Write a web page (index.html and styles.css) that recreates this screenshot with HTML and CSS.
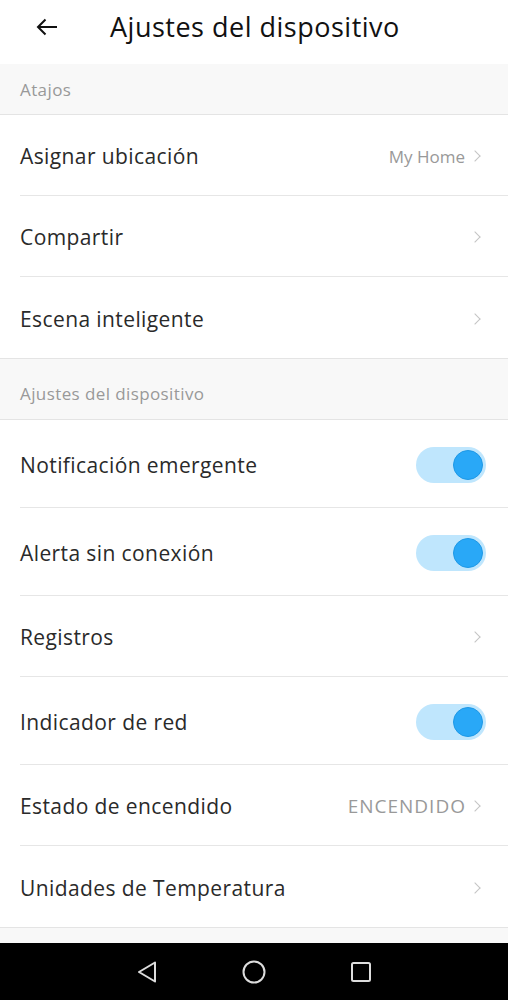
FILE: index.html
```html
<!DOCTYPE html>
<html lang="es">
<head>
  <meta charset="UTF-8">
  <title>Ajustes del dispositivo</title>
  <link rel="stylesheet" href="styles.css">
</head>
<body>

  <div class="screen">

    <div class="topbar">
      <svg class="back" width="22" height="18" viewBox="0 0 22 18">
        <path d="M21 9H2M9.5 1.5L2 9l7.5 7.5" fill="none" stroke="#111" stroke-width="2"/>
      </svg>
      <div class="title">Ajustes del dispositivo</div>
    </div>

    <div class="section section-first">Atajos</div>

    <div class="row">
      <span class="label">Asignar ubicación</span>
      <span class="value">My Home</span>
      <span class="chev"></span>
    </div>
    <div class="row">
      <span class="label">Compartir</span>
      <span class="chev"></span>
    </div>
    <div class="row row-last">
      <span class="label">Escena inteligente</span>
      <span class="chev"></span>
    </div>

    <div class="section">Ajustes del dispositivo</div>

    <div class="row row-tall">
      <span class="label">Notificación emergente</span>
      <span class="toggle"><span class="knob"></span></span>
    </div>
    <div class="row row-tall">
      <span class="label">Alerta sin conexión</span>
      <span class="toggle"><span class="knob"></span></span>
    </div>
    <div class="row">
      <span class="label">Registros</span>
      <span class="chev"></span>
    </div>
    <div class="row row-tall">
      <span class="label">Indicador de red</span>
      <span class="toggle"><span class="knob"></span></span>
    </div>
    <div class="row">
      <span class="label">Estado de encendido</span>
      <span class="value value-caps">ENCENDIDO</span>
      <span class="chev"></span>
    </div>
    <div class="row row-last">
      <span class="label">Unidades de Temperatura</span>
      <span class="chev"></span>
    </div>

    <div class="gap"></div>

    <div class="navbar">
      <svg width="22" height="24" viewBox="0 0 22 24">
        <path d="M19 2.5L3 12l16 9.5z" fill="none" stroke="#ddd" stroke-width="2" stroke-linejoin="round"/>
      </svg>
      <svg width="24" height="24" viewBox="0 0 24 24">
        <circle cx="12" cy="12" r="10.5" fill="none" stroke="#ddd" stroke-width="2"/>
      </svg>
      <svg width="22" height="22" viewBox="0 0 22 22">
        <rect x="2" y="2" width="18" height="18" rx="1.5" fill="none" stroke="#ddd" stroke-width="2"/>
      </svg>
    </div>

  </div>

</body>
</html>
```

FILE: styles.css
```css
body {
  margin: 0;
  background: #fff;
  font-family: "Open Sans", "Noto Sans", sans-serif;
  color: #222;
}

.screen {
  width: 508px;
  height: 1000px;
  display: flex;
  flex-direction: column;
}

/* header */
.topbar {
  height: 64px;
  flex: none;
  display: flex;
  align-items: center;
  padding-bottom: 12px;
  box-sizing: border-box;
}

.back {
  margin-left: 36px;
  margin-top: 2px;
}

.title {
  margin-left: 52px;
  font-size: 27px;
  letter-spacing: 0.5px;
  color: #111;
}

/* section headers */
.section {
  height: 62px;
  flex: none;
  box-sizing: border-box;
  background: #f8f8f8;
  border-top: 1px solid #e4e4e4;
  border-bottom: 1px solid #e4e4e4;
  padding: 8px 20px 0;
  display: flex;
  align-items: center;
  font-size: 17px;
  letter-spacing: 0.4px;
  color: #999;
}

.section-first {
  border-top: none;
  height: 51px;
  padding-top: 0;
}

/* rows */
.row {
  height: 81px;
  flex: none;
  margin-left: 20px;
  padding: 2px 26px 0 0;
  display: flex;
  align-items: center;
  border-bottom: 1px solid #e6e6e6;
  box-sizing: border-box;
}

.row-tall {
  height: 88px;
}

.row-last {
  border-bottom: none;
}

.label {
  flex: 1;
  font-size: 21px;
  color: #2a2a2a;
  letter-spacing: 0.4px;
}

.value {
  font-size: 17px;
  color: #999;
  margin-right: 6px;
}

.value-caps {
  font-size: 19px;
  letter-spacing: 1px;
  margin-right: 5px;
}

.chev {
  width: 7px;
  height: 7px;
  border-top: 1.5px solid #c4c4c4;
  border-right: 1.5px solid #c4c4c4;
  transform: rotate(45deg);
  margin-right: 3px;
}

/* switches */
.toggle {
  width: 70px;
  height: 36px;
  border-radius: 18px;
  background: #bfe6fd;
  display: flex;
  align-items: center;
  justify-content: flex-end;
  padding: 0 3px;
  box-sizing: border-box;
  margin-right: -4px;
}

.knob {
  width: 30px;
  height: 30px;
  border-radius: 50%;
  background: #29a8f7;
  border: 1px solid #1e98e6;
  box-sizing: border-box;
}

.gap {
  height: 16px;
  flex: none;
  background: #f8f8f8;
  border-top: 1px solid #e4e4e4;
  box-sizing: border-box;
}

/* android nav */
.navbar {
  flex: 1;
  background: #000;
  display: flex;
  align-items: center;
  justify-content: center;
  gap: 84px;
}
```
